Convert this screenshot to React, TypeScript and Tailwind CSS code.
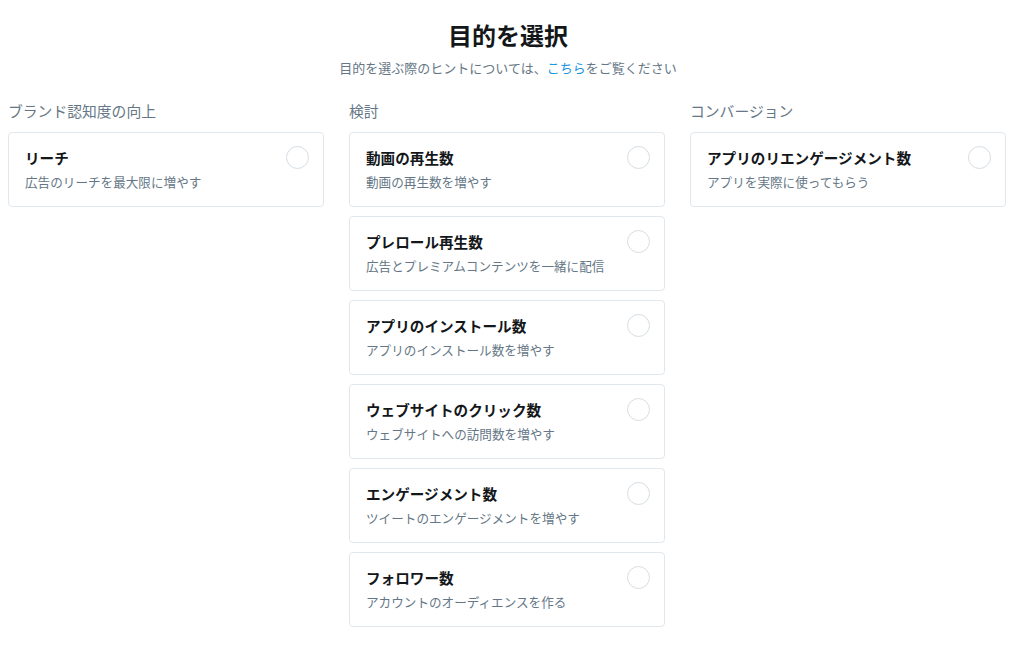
import React from 'react'

type Objective = {
  title: string
  description: string
}

type Group = {
  label: string
  items: Objective[]
}

const groups: Group[] = [
  {
    label: 'ブランド認知度の向上',
    items: [{ title: 'リーチ', description: '広告のリーチを最大限に増やす' }]
  },
  {
    label: '検討',
    items: [
      { title: '動画の再生数', description: '動画の再生数を増やす' },
      { title: 'プレロール再生数', description: '広告とプレミアムコンテンツを一緒に配信' },
      { title: 'アプリのインストール数', description: 'アプリのインストール数を増やす' },
      { title: 'ウェブサイトのクリック数', description: 'ウェブサイトへの訪問数を増やす' },
      { title: 'エンゲージメント数', description: 'ツイートのエンゲージメントを増やす' },
      { title: 'フォロワー数', description: 'アカウントのオーディエンスを作る' }
    ]
  },
  {
    label: 'コンバージョン',
    items: [{ title: 'アプリのリエンゲージメント数', description: 'アプリを実際に使ってもらう' }]
  }
]

function ObjectiveCard({ item }: { item: Objective }) {
  return (
    <div className="relative rounded-[4px] border border-[#e1e8ed] bg-white pl-[16px] pr-[50px] pt-[15px] pb-[14px]">
      <div className="text-[14.6px] leading-[20px] font-bold text-[#14171a]">{item.title}</div>
      <div className="mt-[6px] text-[12.6px] leading-[18px] text-[#657786]">{item.description}</div>
      {/* radio */}
      <span className="absolute right-[14px] top-[13px] h-[23px] w-[23px] rounded-full border border-[#d5dde3] bg-white" />
    </div>
  )
}

export default function App() {
  return (
    <div
      className="min-h-[648px] w-full bg-white pt-[20px]"
      style={{ fontFamily: '"Noto Sans", "Noto Sans CJK JP", sans-serif' }}
    >
      {/* Header */}
      <div className="pr-[8px] text-center">
        <h1 className="text-[24px] leading-[32px] font-bold text-[#14171a]">目的を選択</h1>
        <p className="mt-[6px] text-[13px] leading-[20px] text-[#657786]">
          目的を選ぶ際のヒントについては、<a className="text-[#1b95e0]">こちら</a>をご覧ください
        </p>
      </div>

      {/* Columns */}
      <div className="mt-[23px] grid grid-cols-[316px_316px_316px] gap-x-[25px] pl-[8px]">
        {groups.map((group) => (
          <div key={group.label}>
            <div className="text-[14.8px] leading-[20px] text-[#657786]">{group.label}</div>
            <div className="mt-[11px] flex flex-col gap-[9px]">
              {group.items.map((item) => (
                <ObjectiveCard key={item.title} item={item} />
              ))}
            </div>
          </div>
        ))}
      </div>
    </div>
  )
}
